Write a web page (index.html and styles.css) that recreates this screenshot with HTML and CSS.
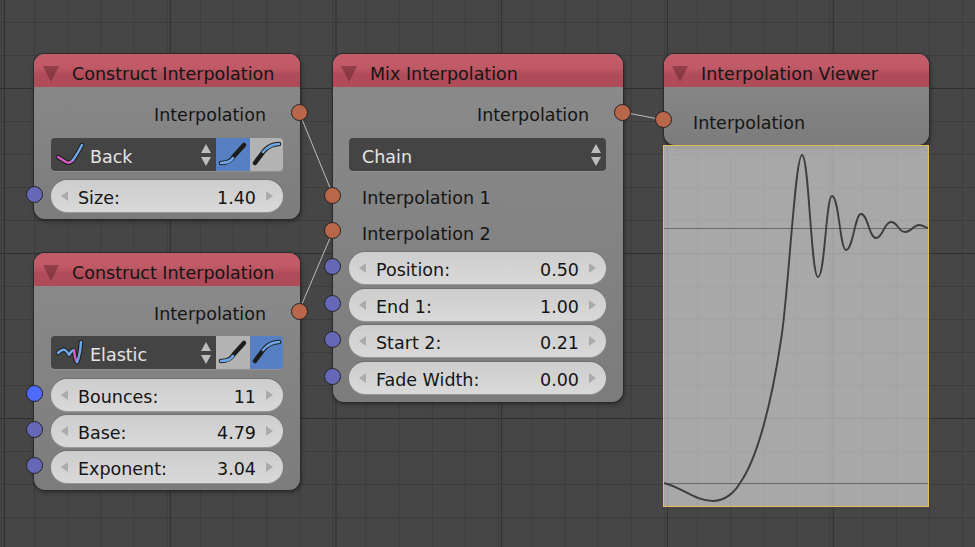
FILE: index.html
```html
<!DOCTYPE html>
<html>
 <head>
  <title>Interpolation nodes</title>
  <link rel="stylesheet" href="styles.css">
 </head>
 <body>
  <div class="canvas">
   <svg class="wires" width="975" height="547">
    <line x1="299" y1="112" x2="333" y2="195"/>
    <line x1="299" y1="311" x2="333" y2="231"/>
    <line x1="622" y1="112" x2="664" y2="120"/>
   </svg>

   <div class="node node-back">
    <div class="header"><span class="collapse"></span>Construct Interpolation</div>
    <div class="body">
     <div class="row output"><span class="socket orange"></span>Interpolation</div>
     <div class="row">
      <div class="combo">
       <div class="select with-icon">
        <svg class="curve-icon" width="36" height="33">
         <path class="edge" d="M7 19 L15 24 Q19 26 22 22 Q27 15 31 7"/>
         <path class="pink" d="M7 19 L15 24 Q19 26 22 22"/>
         <path class="blue" d="M22 22 Q27 15 31 7"/>
        </svg>
        Back<span class="spin"></span>
       </div>
       <div class="toggle on">
        <svg width="34" height="33">
         <path class="edge" d="M5 25 Q14 25 18 18 L28 7"/>
         <path class="blue" d="M5 25 Q14 25 17 20"/>
        </svg>
       </div>
       <div class="toggle last">
        <svg width="33" height="33">
         <path class="edge" d="M5 25 L14 13 Q20 6 29 6"/>
         <path class="blue" d="M13 14 Q20 6 29 6"/>
        </svg>
       </div>
      </div>
     </div>
     <div class="row"><span class="socket purple"></span><div class="field"><span>Size:</span><span>1.40</span></div></div>
    </div>
   </div>

   <div class="node node-elastic">
    <div class="header"><span class="collapse"></span>Construct Interpolation</div>
    <div class="body">
     <div class="row output"><span class="socket orange"></span>Interpolation</div>
     <div class="row">
      <div class="combo">
       <div class="select with-icon">
        <svg class="curve-icon" width="36" height="33">
         <path class="edge" d="M7 17 Q11 13 14 14 Q16 15 18 19 Q20 15 23 14 Q24 24 26 26 Q29 20 30 6"/>
         <path class="blue" d="M7 17 Q11 13 14 14 Q16 15 18 19 Q20 15 23 14"/>
         <path class="pink" d="M23 14 Q24 24 26 26"/>
         <path class="blue" d="M26 26 Q29 20 30 6"/>
        </svg>
        Elastic<span class="spin"></span>
       </div>
       <div class="toggle">
        <svg width="34" height="33">
         <path class="edge" d="M5 25 Q14 25 18 18 L28 7"/>
         <path class="blue" d="M5 25 Q14 25 17 20"/>
        </svg>
       </div>
       <div class="toggle last on">
        <svg width="33" height="33">
         <path class="edge" d="M5 25 L14 13 Q20 6 29 6"/>
         <path class="blue" d="M13 14 Q20 6 29 6"/>
        </svg>
       </div>
      </div>
     </div>
     <div class="row"><span class="socket bright"></span><div class="field"><span>Bounces:</span><span>11</span></div></div>
     <div class="row tight"><span class="socket purple"></span><div class="field"><span>Base:</span><span>4.79</span></div></div>
     <div class="row tight"><span class="socket purple"></span><div class="field"><span>Exponent:</span><span>3.04</span></div></div>
    </div>
   </div>

   <div class="node node-mix">
    <div class="header"><span class="collapse"></span>Mix Interpolation</div>
    <div class="body">
     <div class="row output"><span class="socket orange"></span>Interpolation</div>
     <div class="row">
      <div class="combo"><div class="select">Chain<span class="spin"></span></div></div>
     </div>
     <div class="row input first-input"><span class="socket orange"></span>Interpolation 1</div>
     <div class="row input second-input"><span class="socket orange"></span>Interpolation 2</div>
     <div class="row after-input"><span class="socket purple"></span><div class="field"><span>Position:</span><span>0.50</span></div></div>
     <div class="row mix-field"><span class="socket purple"></span><div class="field"><span>End 1:</span><span>1.00</span></div></div>
     <div class="row mix-field"><span class="socket purple"></span><div class="field"><span>Start 2:</span><span>0.21</span></div></div>
     <div class="row mix-field"><span class="socket purple"></span><div class="field"><span>Fade Width:</span><span>0.00</span></div></div>
    </div>
   </div>

   <div class="node node-viewer">
    <div class="header"><span class="collapse"></span>Interpolation Viewer</div>
    <div class="body">
     <div class="row input viewer-input"><span class="socket orange"></span>Interpolation</div>
    </div>
   </div>

   <svg class="plot" width="266" height="362" viewBox="663 145 266 362">
    <line class="axis" x1="663" y1="228.5" x2="929" y2="228.5"/>
    <line class="axis" x1="663" y1="483.5" x2="929" y2="483.5"/>
    <path class="graph" d="M663 483 C680 486 695 501 713 501 C725 501 735 492 740 483 C758 458 772 400 781 340 C788 300 795 155 802 155 C809 155 811 277 818 277 C825 277 826 196 832 196 C839 196 840 250 846 250 C853 250 855 214 861 214 C868 214 869 238 876 238 C883 238 884 222 891 222 C898 222 898 232 905 232 C912 232 913 225 919 225 C923 225 925 227 928 228"/>
   </svg>
  </div>
 </body>
</html>
```

FILE: styles.css
```css
html, body { margin: 0; padding: 0; }

.canvas
{
 position: relative;
 width: 975px;
 height: 547px;
 overflow: hidden;
 font: 17.5px "DejaVu Sans", sans-serif;
 color: #151515;
 background-color: #464646;
 background-image:
  linear-gradient(to right, #2f2f2f 1px, transparent 1px),
  linear-gradient(to bottom, #2f2f2f 1px, transparent 1px),
  linear-gradient(to right, #3c3c3c 1px, transparent 1px),
  linear-gradient(to bottom, #3c3c3c 1px, transparent 1px);
 background-size: 165.75px 165px, 165px 165px, 33.15px 33px, 33px 33px;
 background-position: 4px 0, 0 88px, 1px 0, 0 22px;
}

.wires { position: absolute; left: 0; top: 0; z-index: 2; }
.wires line { stroke: #bcbcbc; stroke-width: 1; }

/* nodes sit on a free canvas, so these four carry coordinates */
.node
{
 position: absolute;
 box-sizing: border-box;
 border-radius: 11px;
 box-shadow: 0 0 0 1px #2a2a2a, 1px 2px 5px rgba(0, 0, 0, 0.45);
 background: linear-gradient(to bottom, rgba(142, 142, 142, 0.96), rgba(126, 126, 126, 0.96));
}
.node-back { left: 34px; top: 54px; width: 266px; height: 165px; }
.node-elastic { left: 34px; top: 253px; width: 266px; height: 237px; }
.node-mix { left: 333px; top: 54px; width: 290px; height: 348px; }
.node-viewer { left: 664px; top: 54px; width: 265px; height: 91px; }

.header
{
 display: flex;
 align-items: center;
 box-sizing: border-box;
 height: 33px;
 padding-top: 6px;
 border-radius: 11px 11px 0 0;
 background: linear-gradient(to bottom, #c45c68 0, #c05a66 40%, #b04c59 62%, #b04c59 100%);
 white-space: nowrap;
}
.collapse
{
 width: 0;
 height: 0;
 margin: 0 13px 0 9px;
 border-left: 8px solid transparent;
 border-right: 8px solid transparent;
 border-top: 16px solid rgba(90, 30, 40, 0.45);
}
.node-mix .collapse, .node-viewer .collapse { margin-left: 8px; }

.body { padding-top: 14px; }

.row
{
 position: relative;
 display: flex;
 align-items: center;
 min-height: 28px;
 margin-bottom: 9px;
 padding: 0 17px;
}
.node-mix .row { padding-left: 16px; }
.row.tight { margin-top: -5px; }
.output { justify-content: flex-end; padding-right: 34px; }
.node-elastic .output { margin-bottom: 8px; }
.node-elastic .output + .row { margin-bottom: 10px; }
.node .input { padding-left: 29px; }
.first-input { margin: 13px 0 0; }
.second-input { margin: 8px 0 0; }
.after-input { margin: 4px 0 0; }
.mix-field { margin: 4.5px 0 0; }
.viewer-input { margin-top: 8px; }

.socket
{
 position: absolute;
 z-index: 3;
 left: -8px;
 top: calc(50% - 10px);
 box-sizing: border-box;
 width: 17px;
 height: 17px;
 border: 1px solid #222;
 border-radius: 50%;
}
.node-mix .socket, .node-viewer .socket { left: -9px; }
.node .output .socket { left: auto; right: -8px; top: calc(50% - 11px); }
.input .socket { top: calc(50% - 11px); }
.second-input .socket, .viewer-input .socket { top: calc(50% - 12px); }
.orange { background: #b9674a; }
.purple { background: #6767b8; }
.bright { background: #4d6cff; }

.combo { display: flex; flex: 1; height: 33px; }

.select
{
 position: relative;
 display: flex;
 align-items: center;
 flex: 1;
 box-sizing: border-box;
 padding: 4px 0 0 13px;
 color: #e4e4e4;
 background: #444;
 border-radius: 4px;
 box-shadow: 0 1px 0 rgba(255, 255, 255, 0.12);
}
.select.with-icon { padding-left: 39px; border-radius: 4px 0 0 4px; }
.curve-icon { position: absolute; left: 0; top: 0; }
.spin
{
 position: absolute;
 right: 5px;
 top: 6px;
 width: 0;
 height: 0;
 border-left: 5px solid transparent;
 border-right: 5px solid transparent;
 border-bottom: 9px solid #bdbdbd;
}
.spin::after
{
 content: "";
 position: absolute;
 left: -5px;
 top: 13px;
 border-left: 5px solid transparent;
 border-right: 5px solid transparent;
 border-top: 9px solid #bdbdbd;
}

.toggle
{
 width: 33px;
 height: 33px;
 background: #b3b3b3;
 box-shadow: 0 1px 0 rgba(255, 255, 255, 0.12);
}
.toggle:not(.last) { width: 34px; }
.toggle.on { background: #5680c3; }
.toggle.last { border-radius: 0 4px 4px 0; }
.toggle svg { display: block; }

.edge, .pink, .blue { fill: none; stroke-linecap: round; stroke-linejoin: round; }
.edge { stroke: #1d1d1d; stroke-width: 4.5; }
.pink { stroke: #d25ec2; stroke-width: 2.5; }
.blue { stroke: #6fa6e6; stroke-width: 2.5; }

.field
{
 position: relative;
 display: flex;
 flex: 1;
 justify-content: space-between;
 align-items: center;
 box-sizing: border-box;
 height: 32px;
 padding: 4px 27px 0;
 border-radius: 16px;
 background: linear-gradient(to bottom, #cdcdcd, #d9d9d9);
 box-shadow: 0 1px 0 rgba(255, 255, 255, 0.2), 0 -1px 0 rgba(60, 60, 60, 0.25);
}
.field::before, .field::after
{
 content: "";
 position: absolute;
 top: 11px;
 border-top: 5px solid transparent;
 border-bottom: 5px solid transparent;
}
.field::before { left: 10px; border-right: 7px solid #ababab; }
.field::after { right: 10px; border-left: 7px solid #ababab; }

.plot
{
 position: absolute;
 left: 663px;
 top: 145px;
 box-sizing: border-box;
 outline: 1px solid #e8bd57;
 outline-offset: -1px;
 background: rgba(255, 255, 255, 0.53);
}
.axis { stroke: #6b6b6b; stroke-width: 1; }
.graph { fill: none; stroke: #3e3e3e; stroke-width: 1.9; }
```
